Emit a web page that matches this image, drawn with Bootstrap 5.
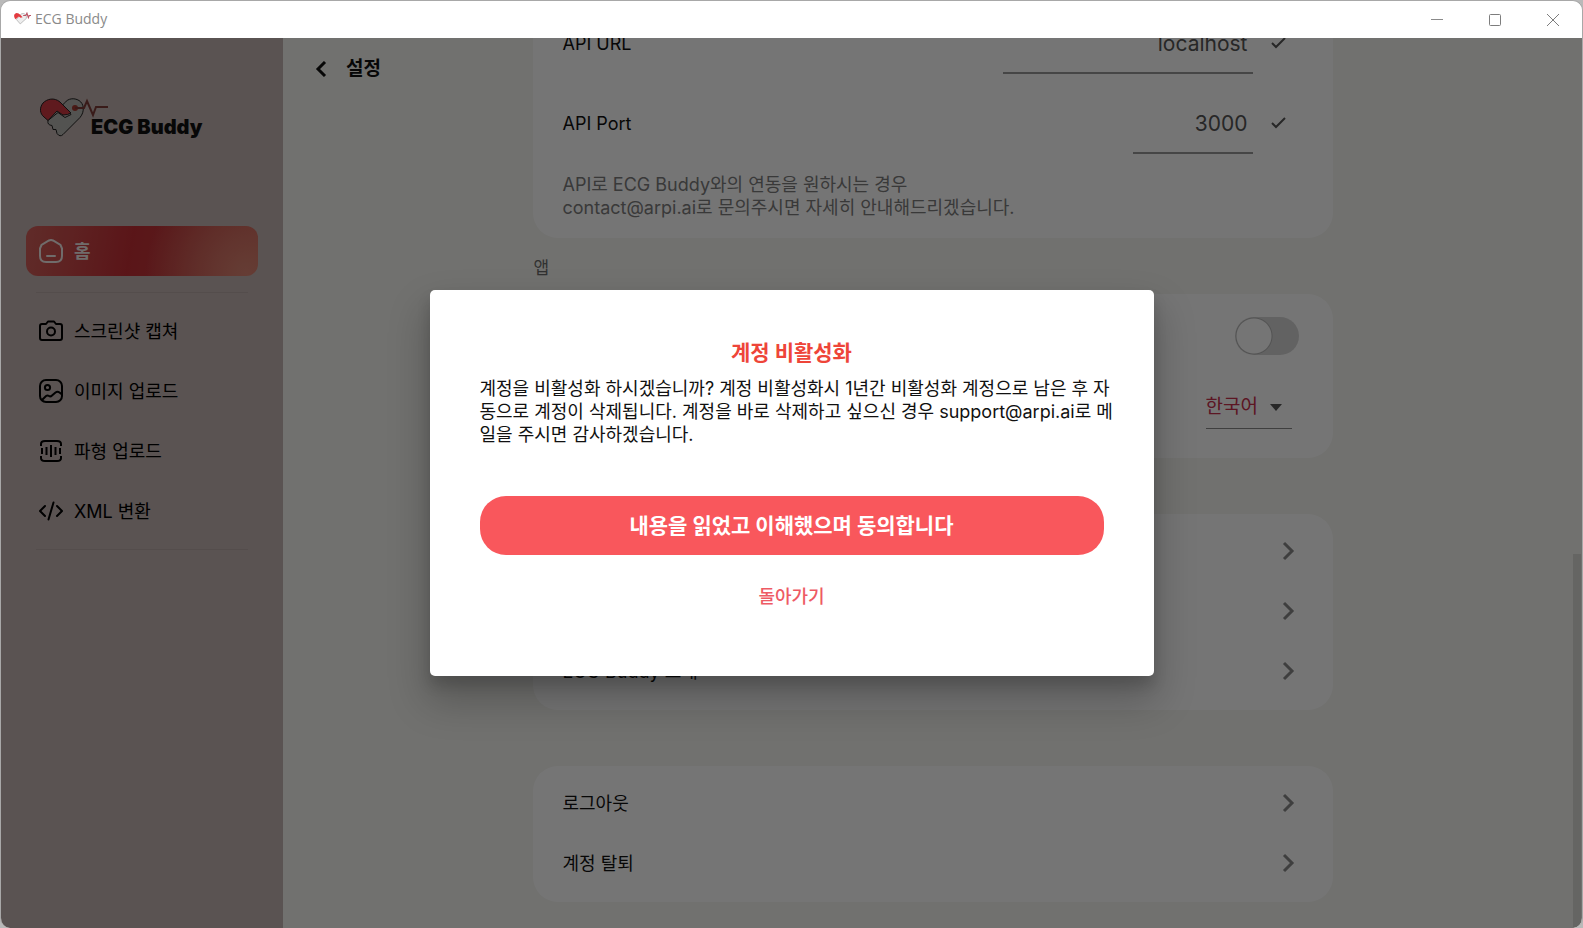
<!DOCTYPE html>
<html lang="ko">
<head>
<meta charset="utf-8">
<meta name="viewport" content="width=device-width, initial-scale=1">
<title>ECG Buddy</title>
<link href="https://cdn.jsdelivr.net/npm/bootstrap@5.3.0/dist/css/bootstrap.min.css" rel="stylesheet">
<style>
  body { font-family: Inter, "Noto Sans CJK KR", sans-serif; font-size: 18px; line-height: 23px; color: #111; background: #b9b9b9; }
  button, input, select { font: inherit; color: inherit; }
  .app-window { border: 1px solid #a8a8a8; border-bottom: 0; border-radius: 10px; background: #fff; }
  .title-bar { height: 37px; padding: 0 0 2px 12px; font-family: "Open Sans", sans-serif; font-size: 14px; color: #8a8a8a; }
  .win-btn { width: 58px; height: 35px; background: none; border: 0; padding: 0; }
  .side { width: 282px; padding: 59px 25px 0; background: #c4b5b2; }
  .logo-link { height: 129px; padding: 1px 0 0 14px; color: #111; }
  .logo-name { font-family: Inter, sans-serif; font-weight: 900; font-size: 20px; line-height: 22px; margin: 18px 0 0 -17px; }
  .side-link { height: 60px; gap: 11px; padding-left: 13px; color: #000; text-decoration: none; }
  .side-link.home { height: 50px; border-radius: 12px; color: #f3ebe9; background: radial-gradient(circle at 95% 95%, #dd8573 0, rgba(221,133,115,0) 45%), linear-gradient(100deg, #d2605a 0, #c52f36 45%, #c23a3c 65%, #c9574e 100%); }
  .side-line { height: 1px; margin: 0 10px; background: #b7a8a5; }
  .settings { background: #f6f6f2; }
  .side-col { flex: 1 1 0; min-width: 0; }
  .page-title { padding: 19px 0 0 32px; gap: 19px; font-size: 19px; font-weight: 700; }
  .back-btn { display: flex; background: none; border: 0; padding: 0; }
  .center-col { flex: 0 1 800px; padding-bottom: 26px; }
  .panel { flex: none; background: #fff; border-radius: 25px; padding: 7px 30px 9px; }
  .section-name { flex: none; height: 56px; padding: 4px 0 0 1px; font-size: 17px; color: #6b6b6b; }
  .section-gap { flex: none; height: 56px; }
  .field-row { height: 80px; }
  .field-input { height: 62px; text-align: right; border: 0; border-bottom: 2px solid #999; padding: 2px 5px 0; background: transparent; font-size: 21px; color: #555; border-radius: 0; }
  .url { width: 250px; } .port { width: 120px; }
  .help { color: #7d7d7d; padding: 10px 0; margin: 0; }
  .switch-row { height: 70px; }
  .nav-row { height: 60px; width: 100%; border: 0; background: none; padding: 0 5px 0 0; text-align: left; }
  .big-switch.form-check-input { width: 64px; height: 38px; margin: 0; border: 0; background-color: #d6d6d6; background-image: radial-gradient(circle 18px, #fff 0, #fff 17px, #b4b4b4 18px, rgba(180,180,180,0) 19px); background-size: 38px 38px; background-position: left center; }
  .lang-row { padding: 14px 11px 20px 0; }
  .lang { width: 86px; height: 44px; border: 0; border-bottom: 1px solid #8a8a8a; border-radius: 0; padding: 0; font-size: 19px; color: #c9304c; background: transparent url("data:image/svg+xml,%3Csvg xmlns='http://www.w3.org/2000/svg' viewBox='0 0 12 7'%3E%3Cpath fill='%23555' d='M0 0h12L6 7z'/%3E%3C/svg%3E") no-repeat 64px 19px / 12px 7px; appearance: none; }
  .scroll-thumb { right: 1px; bottom: 0; width: 8px; height: 42%; background: #dcdcd7; }
  .shade { background: rgba(0,0,0,.54); }
  .dialog-box { width: 724px; max-width: 94%; border-radius: 5px; padding: 50px 50px 68px; box-shadow: 0 22px 38px 4px rgba(0,0,0,.22), 0 9px 14px rgba(0,0,0,.14); background: #fff; }
  .dialog-title { font-size: 21px; line-height: 26px; font-weight: 700; color: #ee4539; margin: 0 0 11px; }
  .dialog-text { margin: 0 0 50px; white-space: nowrap; }
  .agree { height: 59px; border: 0; border-radius: 26px; background: #f9575c; color: #fff; font-size: 21px; font-weight: 700; }
  .agree:hover { background: #f9575c; color: #fff; }
  .return { border: 0; background: none; color: #ee5a64; font-weight: 500; padding: 0; margin-top: 30px; }
</style>
</head>
<body>
<div class="app-window vh-100 d-flex flex-column overflow-hidden">
  <header class="title-bar d-flex align-items-center flex-shrink-0">
    <svg width="18" height="14" viewBox="0 0 62 44" aria-hidden="true"><path d="M12 24 25 39 46 20Q48 6 36 3 28 3 26 7L15 20z" fill="#eee" stroke="#999" stroke-width="2"/><path d="M9 23C0 12 4 2 13 1q7 0 12 6l8 9-7 2-6-5z" fill="#e33b40"/><path d="M35 10h9l4-8 5 15 3-7h8" fill="none" stroke="#b56" stroke-width="4"/></svg>
    <span class="ms-1 me-auto">ECG Buddy</span>
    <button class="win-btn" aria-label="최소화"><svg width="12" height="12" viewBox="0 0 12 12" fill="none" stroke="#8a8a8a"><path d="M0 5.500h12"/></svg></button>
    <button class="win-btn" aria-label="최대화"><svg width="12" height="12" viewBox="0 0 12 12" fill="none" stroke="#7d7d7d"><rect x=".5" y=".5" width="11" height="11" rx="1"/></svg></button>
    <button class="win-btn" aria-label="닫기"><svg width="12" height="12" viewBox="0 0 12 12" fill="none" stroke="#7d7d7d"><path d="M0 0l12 12M12 0 0 12"/></svg></button>
  </header>

  <div class="d-flex flex-fill position-relative overflow-hidden">
    <aside class="side flex-shrink-0">
      <a class="logo-link d-flex text-decoration-none" href="#">
        <svg class="flex-shrink-0" width="68" height="40" viewBox="0 0 68 40" fill="none" aria-hidden="true">
          <path d="M8 22.500q-1 4.500 4 5l1 4h3l1 4q3 4 6 1l17-17c5-6 4-14-1-17-5-3-11-2-14 2l-3 3 9 9-6 3-7-5z" fill="#b5b5b0" stroke="#222" stroke-width="1"/>
          <path d="M8 22.500 17 13l6 4q5 0 8-2L20 4C14-1 7 1 3 5c-4 5-3 11 1 14z" fill="#d03a42" stroke="#222" stroke-width="1"/>
          <circle cx="35" cy="10" r="3" fill="#a33a30"/>
          <path d="M35 10h9l3-7 6 14 3-8h12" stroke="#7d3c38" stroke-width="2"/>
        </svg>
        <span class="logo-name">ECG Buddy</span>
      </a>
      <nav>
        <a class="side-link home d-flex align-items-center" href="#">
          <svg width="24" height="24" viewBox="0 0 24 24" fill="none" stroke="currentColor" stroke-width="2" stroke-linecap="round"><path d="M1 9.500 2.500 6 10 1.500q2-1 4 0L21.500 6 23 9.500V17q0 6-6 6H7q-6 0-6-6zM8 17h8"/></svg>
          <span class="fw-bold">홈</span></a>
        <div class="side-line mt-3 mb-2"></div>
        <a class="side-link d-flex align-items-center" href="#">
          <svg width="24" height="24" viewBox="0 0 24 24" fill="none" stroke="currentColor" stroke-width="2" stroke-linejoin="round"><path d="M3 5h4l2-2.500h6L17 5h4q2 0 2 2v12q0 2-2 2H3q-2 0-2-2V7q0-2 2-2z"/><circle cx="12" cy="12.500" r="4"/></svg>
          <span>스크린샷 캡쳐</span></a>
        <a class="side-link d-flex align-items-center" href="#">
          <svg width="24" height="24" viewBox="0 0 24 24" fill="none" stroke="currentColor" stroke-width="2"><rect x="1" y="1" width="22" height="22" rx="6"/><circle cx="8.500" cy="8.500" r="2.600"/><path d="M3 21l4-4q1.500-1 3 0 1.500 1 3-.500l3.500-3q2-1.500 4 0l2.500 2"/></svg>
          <span>이미지 업로드</span></a>
        <a class="side-link d-flex align-items-center" href="#">
          <svg width="24" height="24" viewBox="0 0 24 24" fill="none" stroke="currentColor" stroke-width="2"><path d="M2 7V5q0-3 4-3h12q4 0 4 3v2M2 17v2q0 3 4 3h12q4 0 4-3v-2M3 9v6M7.500 8v8M12 6v12M16.500 8v8M21 9v6"/></svg>
          <span>파형 업로드</span></a>
        <a class="side-link d-flex align-items-center" href="#">
          <svg width="24" height="24" viewBox="0 0 24 24" fill="none" stroke="currentColor" stroke-width="2" stroke-linecap="round" stroke-linejoin="round"><path d="M6 7l-5 5 5 5M18 7l5 5-5 5M14.500 3.500l-5 17"/></svg>
          <span>XML 변환</span></a>
        <div class="side-line mt-2"></div>
      </nav>
    </aside>

    <main class="settings d-flex flex-fill">
      <div class="side-col">
        <div class="page-title d-flex align-items-center">
          <button class="back-btn" aria-label="뒤로"><svg width="12" height="16" viewBox="0 0 12 16" fill="none" stroke="currentColor" stroke-width="3"><path d="M10 1 3 8l7 7"/></svg></button>
          <span>설정</span>
        </div>
      </div>
      <div class="center-col d-flex flex-column justify-content-end">
        <section class="panel">
          <div class="field-row d-flex align-items-center">
            <label class="me-auto" for="url">API URL</label>
            <input class="field-input url" id="url" value="localhost">
            <svg class="ms-3 me-3" width="18" height="14" viewBox="0 0 18 14" fill="none" stroke="#555" stroke-width="2"><path d="M3 7l4 4 9-9"/></svg>
          </div>
          <div class="field-row d-flex align-items-center">
            <label class="me-auto" for="port">API Port</label>
            <input class="field-input port" id="port" value="3000">
            <svg class="ms-3 me-3" width="18" height="14" viewBox="0 0 18 14" fill="none" stroke="#555" stroke-width="2"><path d="M3 7l4 4 9-9"/></svg>
          </div>
          <p class="help">API로 ECG Buddy와의 연동을 원하시는 경우<br>contact@arpi.ai로 문의주시면 자세히 안내해드리겠습니다.</p>
        </section>
        <div class="section-name d-flex align-items-center">앱</div>
        <section class="panel">
          <div class="switch-row form-switch d-flex align-items-center justify-content-end p-0 pe-1">
            <input class="form-check-input big-switch" type="checkbox" role="switch" aria-label="앱 설정">
          </div>
          <div class="lang-row d-flex justify-content-end">
            <select class="lang" aria-label="언어"><option>한국어</option></select>
          </div>
        </section>
        <div class="section-gap"></div>
        <section class="panel">
          <button class="nav-row d-flex align-items-center justify-content-end" aria-label="이용약관"><svg width="20" height="20" viewBox="0 0 20 20" fill="none" stroke="#8a8a8a" stroke-width="3"><path d="M6 2l8 8-8 8"/></svg></button>
          <button class="nav-row d-flex align-items-center justify-content-end" aria-label="개인정보"><svg width="20" height="20" viewBox="0 0 20 20" fill="none" stroke="#8a8a8a" stroke-width="3"><path d="M6 2l8 8-8 8"/></svg></button>
          <button class="nav-row d-flex align-items-center justify-content-between"><span>ECG Buddy 소개</span><svg width="20" height="20" viewBox="0 0 20 20" fill="none" stroke="#8a8a8a" stroke-width="3"><path d="M6 2l8 8-8 8"/></svg></button>
        </section>
        <div class="section-gap"></div>
        <section class="panel">
          <button class="nav-row d-flex align-items-center justify-content-between"><span>로그아웃</span><svg width="20" height="20" viewBox="0 0 20 20" fill="none" stroke="#8a8a8a" stroke-width="3"><path d="M6 2l8 8-8 8"/></svg></button>
          <button class="nav-row d-flex align-items-center justify-content-between"><span>계정 탈퇴</span><svg width="20" height="20" viewBox="0 0 20 20" fill="none" stroke="#8a8a8a" stroke-width="3"><path d="M6 2l8 8-8 8"/></svg></button>
        </section>
      </div>
      <div class="side-col"></div>
      <div class="scroll-thumb position-absolute"></div>
    </main>

    <div class="shade position-absolute top-0 start-0 w-100 h-100 d-flex align-items-center justify-content-center">
      <div class="dialog-box d-flex flex-column" role="dialog" aria-modal="true" aria-labelledby="dlg">
        <h1 class="dialog-title text-center" id="dlg">계정 비활성화</h1>
        <p class="dialog-text">계정을 비활성화 하시겠습니까? 계정 비활성화시 1년간 비활성화 계정으로 남은 후 자<br>동으로 계정이 삭제됩니다. 계정을 바로 삭제하고 싶으신 경우 support@arpi.ai로 메<br>일을 주시면 감사하겠습니다.</p>
        <button class="btn agree w-100">내용을 읽었고 이해했으며 동의합니다</button>
        <button class="return align-self-center">돌아가기</button>
      </div>
    </div>
  </div>
</div>
<script src="https://cdn.jsdelivr.net/npm/bootstrap@5.3.0/dist/js/bootstrap.bundle.min.js"></script>
</body>
</html>
